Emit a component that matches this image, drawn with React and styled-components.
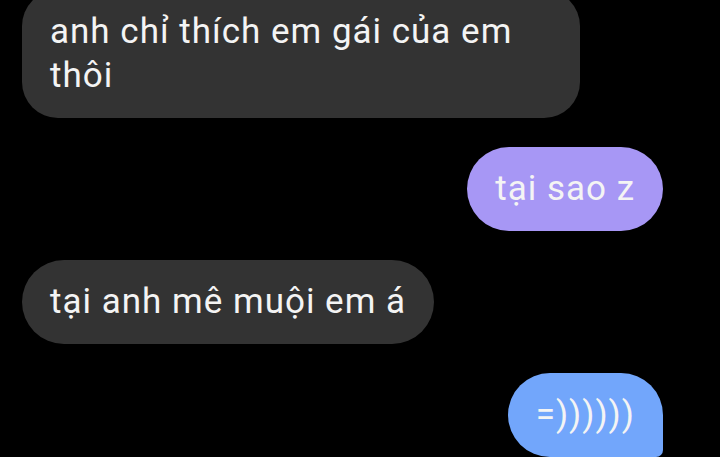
import styled, { createGlobalStyle } from "styled-components";

const GlobalStyle = createGlobalStyle`
    html, body {
        margin: 0;
        padding: 0;
        background: #000;
        height: 100%;
        overflow: hidden;
    }
`;

const messages = [
    { id: 1, mine: false, text: "anh chỉ thích em gái của em thôi", shape: "top" },
    { id: 2, mine: true, text: "tại sao z", tone: "purple", shape: "pill" },
    { id: 3, mine: false, text: "tại anh mê muội em á", shape: "pill" },
    { id: 4, mine: true, text: "=))))))", tone: "blue", shape: "last" },
];

export default function App() {
    return (
        <>
            <GlobalStyle />
            <Screen>
                <Thread>
                    {messages.map((m) => (
                        <Bubble key={m.id} $mine={m.mine} $tone={m.tone} $shape={m.shape}>
                            {m.text}
                        </Bubble>
                    ))}
                </Thread>
            </Screen>
        </>
    );
}

const Screen = styled.div`
    width: 720px;
    height: 457px;
    background: #000;
    overflow: hidden;
`;

const Thread = styled.div`
    display: flex;
    flex-direction: column;
    gap: 29px;
    margin-top: -10px;
    padding: 0 57px 0 22px;
`;

const tones = {
    purple: "#a797f5",
    blue: "#72a6fb",
};

const radii = {
    top: "36px",
    pill: "42px",
    last: "42px 42px 7px 42px",
};

const Bubble = styled.div`
    align-self: ${(p) => (p.$mine ? "flex-end" : "flex-start")};
    max-width: 558px;
    box-sizing: border-box;
    padding: 20px 28px 20px 28px;
    background: ${(p) => (p.$mine ? tones[p.$tone] : "#333333")};
    border-radius: ${(p) => radii[p.$shape]};
    color: #f4f4f4;
    font-family: Roboto, "Noto Sans", sans-serif;
    font-size: 35px;
    line-height: 44px;
    letter-spacing: 1px;
`;
